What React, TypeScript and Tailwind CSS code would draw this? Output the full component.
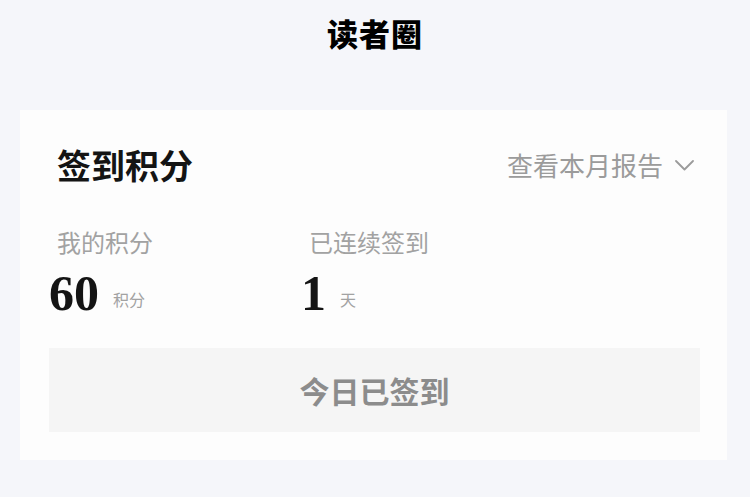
const cjk = "font-['Noto_Sans_CJK_SC',sans-serif]";

function Stat({ label, value, unit }: { label: string; value: string; unit: string }) {
  return (
    <div className="flex flex-col">
      <div className={`ml-[8px] text-[24px] leading-[30px] text-[#a2a2a2] ${cjk}`}>{label}</div>
      <div className="mt-[11px] flex items-end">
        <span className="font-['Liberation_Serif',serif] text-[50px] font-bold leading-none text-[#141414]">
          {value}
        </span>
        <span className={`mb-[11px] ml-[14px] text-[16px] leading-none text-[#a2a2a2] ${cjk}`}>{unit}</span>
      </div>
    </div>
  );
}

export default function App() {
  return (
    <div className="min-h-[497px] w-[750px] bg-[#f5f6fa] pb-[37px]">
      <header className="flex h-[64px] items-center justify-center">
        <h1 className={`text-[31px] font-black leading-none tracking-[1px] text-black ${cjk}`}>读者圈</h1>
      </header>

      <section className="ml-[20px] mr-[23px] mt-[46px] bg-[#fdfdfd] pb-[28px] pl-[29px] pr-[27px] pt-[35px]">
        <div className="flex h-[40px] items-center justify-between">
          <h2 className={`ml-[8px] text-[34px] font-bold leading-[40px] text-[#141414] ${cjk}`}>签到积分</h2>
          <button className={`mr-[6px] flex items-center gap-[12px] text-[26px] leading-none text-[#9b9b9b] ${cjk}`}>
            查看本月报告
            <svg width="19" height="11" viewBox="0 0 19 11" fill="none">
              <path d="M1 1l8.5 8.5L18 1" stroke="#9b9b9b" strokeWidth="1.8" strokeLinecap="round" strokeLinejoin="round" />
            </svg>
          </button>
        </div>

        <div className="mt-[42px] grid grid-cols-[252px_1fr]">
          <Stat label="我的积分" value="60" unit="积分" />
          <Stat label="已连续签到" value="1" unit="天" />
        </div>

        <button
          className={`mt-[30px] flex h-[84px] w-full items-center justify-center bg-[#f5f5f5] text-[30px] font-semibold text-[#8c8c8c] ${cjk}`}
        >
          今日已签到
        </button>
      </section>
    </div>
  );
}
